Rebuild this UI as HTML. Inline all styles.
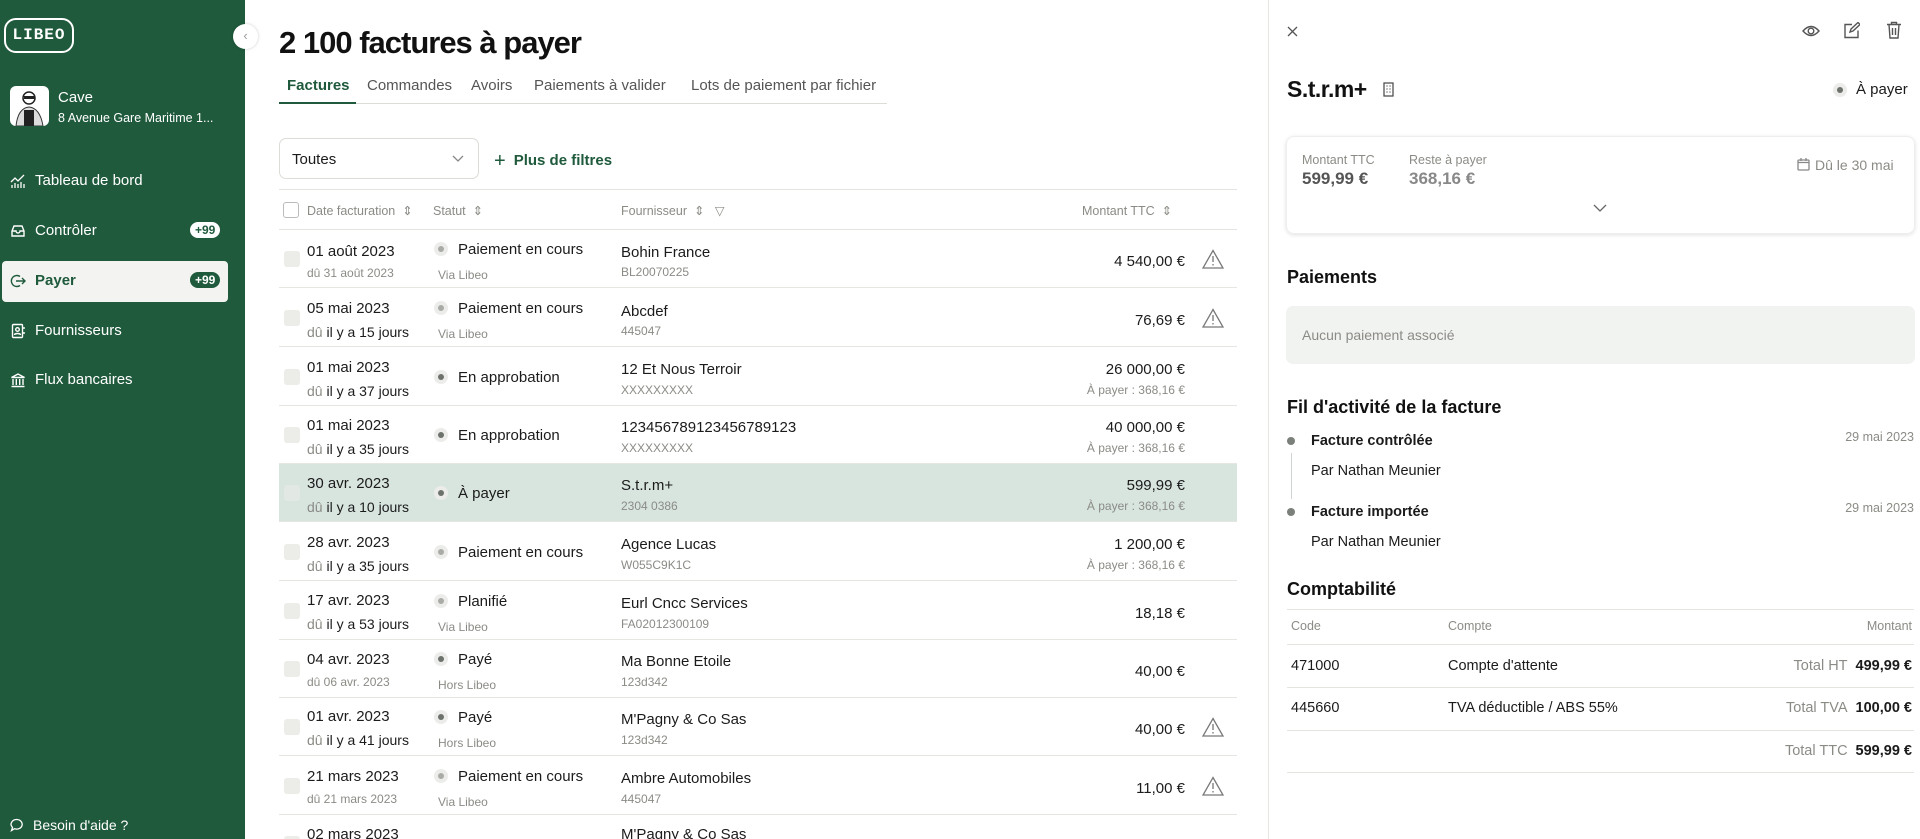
<!DOCTYPE html>
<html><head><meta charset="utf-8">
<style>
*{box-sizing:border-box;margin:0;padding:0}
html{width:1920px;height:839px;overflow:hidden}
body{width:1920px;height:839px;overflow:hidden;position:relative;background:#fff;font-family:"Liberation Sans",Arial,sans-serif;color:#1b1b1b;font-size:15px}
.a{position:absolute;white-space:nowrap}
#sb{position:absolute;left:0;top:0;width:245px;height:839px;background:#1f5a3c;color:#fff}
.nav{position:absolute;left:10px;font-size:15px;color:#fff;display:flex;align-items:center;gap:9px}
.badge{position:absolute;font-size:12px;font-weight:bold;border-radius:9px;padding:1px 5px}
.g{color:#8b8b86}
.s13{font-size:12px}
.row{position:absolute;left:279px;width:958px;height:58px;border-bottom:1px solid #e4e6e1}
.row .a{font-size:15px}
.row .a.s13{font-size:12px}
.cb{position:absolute;left:5px;top:21px;width:16px;height:16px;border-radius:3px;background:#ecece8}
.dot{position:absolute;width:14px;height:14px;border-radius:50%;background:#ecedea}
.dot:after{content:"";position:absolute;left:4px;top:4px;width:6px;height:6px;border-radius:50%;background:#a9aca6}
.dot.dk:after{background:#6d726c}
.warn{position:absolute;left:923px;top:19px}
h2{position:absolute;font-size:18px;font-weight:bold;left:1287px;color:#111}
.ln{position:absolute;left:1287px;width:627px;height:1px;background:#e2e5e0}
</style></head><body>

<div id="sb">
  <div class="a" style="left:4px;top:18px;width:70px;height:35px;border:2px solid #fff;border-radius:12px;font-weight:bold;font-size:16px;letter-spacing:1px;text-align:center;line-height:31px;font-family:'Liberation Mono',monospace">LIBEO</div>
  <div class="a" style="left:10px;top:86px;width:39px;height:40px;background:#fff;border-radius:6px;overflow:hidden">
    <svg width="39" height="40" viewBox="0 0 39 40"><circle cx="19" cy="12" r="6" fill="none" stroke="#222" stroke-width="1.5"/><rect x="14" y="10" width="11" height="3" fill="#222"/><path d="M6 40 Q8 22 19 21 Q30 22 33 40Z" fill="#ddd" stroke="#333"/><rect x="14" y="24" width="10" height="16" fill="#222"/></svg>
  </div>
  <div class="a" style="left:58px;top:89px;font-size:15px">Cave</div>
  <div class="a" style="left:58px;top:111px;font-size:12.5px">8 Avenue Gare Maritime 1...</div>

  <div class="nav" style="top:172px"><svg width="16" height="16" viewBox="0 0 16 16" fill="none" stroke="#fff" stroke-width="1.3"><path d="M1 9l4-4 3 3 6-6"/><path d="M2 15v-3M5 15v-5M8 15v-4M11 15v-6M14 15v-4"/></svg>Tableau de bord</div>
  <div class="nav" style="top:222px"><svg width="16" height="16" viewBox="0 0 16 16" fill="none" stroke="#fff" stroke-width="1.4"><path d="M2 8l2-5h8l2 5v5H2z"/><path d="M2 8h4a2 2 0 0 0 4 0h4"/></svg>Contrôler</div>
  <div class="badge" style="left:190px;top:222px;background:#fff;color:#1f5a3c">+99</div>
  <div class="a" style="left:2px;top:261px;width:226px;height:41px;background:#f3f4f1;border-radius:4px"></div>
  <div class="nav" style="top:272px;color:#1f5a3c;font-weight:bold"><svg width="16" height="16" viewBox="0 0 16 16" fill="none" stroke="#1f5a3c" stroke-width="1.4"><path d="M10 3.5A5.5 5.5 0 1 0 10 12.5"/><path d="M6 8h9M12 5l3 3-3 3"/></svg>Payer</div>
  <div class="badge" style="left:190px;top:272px;background:#1f5a3c;color:#fff">+99</div>
  <div class="nav" style="top:322px"><svg width="16" height="16" viewBox="0 0 16 16" fill="none" stroke="#fff" stroke-width="1.4"><rect x="2.5" y="1.5" width="10" height="13" rx="1"/><circle cx="7.5" cy="6.5" r="1.8"/><path d="M4.5 12c0-2 6-2 6 0M14 4v2M14 9v2"/></svg>Fournisseurs</div>
  <div class="nav" style="top:371px"><svg width="16" height="16" viewBox="0 0 16 16" fill="none" stroke="#fff" stroke-width="1.4"><path d="M1.5 5.5L8 2l6.5 3.5zM3 7v6M6.3 7v6M9.7 7v6M13 7v6M1.5 14.5h13"/></svg>Flux bancaires</div>
  <div class="nav" style="top:817px;left:10px;font-size:14px"><svg width="14" height="14" viewBox="0 0 14 14" fill="none" stroke="#fff" stroke-width="1.3"><path d="M7 1.5a5.5 4.8 0 1 1-2.5 9.2L1.5 12.5l1-3A5.5 4.8 0 0 1 7 1.5z"/></svg>Besoin d'aide ?</div>
</div>
<div class="a" style="left:233px;top:24px;width:25px;height:25px;border-radius:50%;background:#fff;box-shadow:0 0 3px rgba(0,0,0,.2);color:#999;font-size:13px;text-align:center;line-height:24px">‹</div>

<div class="a" style="left:279px;top:25px;font-size:31px;font-weight:bold;letter-spacing:-1px;color:#111">2 100 factures à payer</div>
<div class="a" style="left:287px;top:77px;font-size:15px;font-weight:bold;color:#1f5a3c">Factures</div>
<div class="a" style="left:367px;top:77px;font-size:15px;color:#555">Commandes</div>
<div class="a" style="left:471px;top:77px;font-size:15px;color:#555">Avoirs</div>
<div class="a" style="left:534px;top:77px;font-size:15px;color:#555">Paiements à valider</div>
<div class="a" style="left:691px;top:77px;font-size:15px;color:#555">Lots de paiement par fichier</div>
<div class="a" style="left:279px;top:103px;width:608px;height:1px;background:#dcdcd8"></div>
<div class="a" style="left:279px;top:102px;width:77px;height:2px;background:#1f5a3c"></div>

<div class="a" style="left:279px;top:138px;width:200px;height:41px;border:1px solid #dcdcd8;border-radius:7px;font-size:15px;padding:12px 12px">Toutes
<svg style="position:absolute;right:14px;top:16px" width="12" height="8" viewBox="0 0 12 8" fill="none" stroke="#888" stroke-width="1.3"><path d="M1 1l5 5 5-5"/></svg></div>
<div class="a" style="left:494px;top:148px;font-size:15px;font-weight:bold;color:#1f5a3c"><span style="font-size:20px;font-weight:normal;position:relative;top:2px;margin-right:8px">+</span>Plus de filtres</div>

<div class="a" style="left:279px;top:189px;width:958px;height:1px;background:#e2e5e0"></div>
<div class="a" style="left:283px;top:202px;width:16px;height:16px;border:1px solid #bbb;border-radius:3px"></div>
<div class="a g" style="left:307px;top:203px;font-size:12.5px">Date facturation &nbsp;⇕</div>
<div class="a g" style="left:433px;top:203px;font-size:12.5px">Statut &nbsp;⇕</div>
<div class="a g" style="left:621px;top:203px;font-size:12.5px">Fournisseur &nbsp;⇕ &nbsp; ▽</div>
<div class="a g" style="left:1082px;top:203px;font-size:12.5px">Montant TTC &nbsp;⇕</div>
<div class="a" style="left:279px;top:229px;width:958px;height:1px;background:#e2e5e0"></div>

<div class="row" style="top:230px"><div class="cb"></div>
<div class="a" style="left:28px;top:13px">01 août 2023</div><div class="a g s13" style="left:28px;top:36px">dû 31 août 2023</div>
<div class="dot" style="left:155px;top:12px"></div><div class="a" style="left:179px;top:11px">Paiement en cours</div><div class="a g s13" style="left:159px;top:38px">Via Libeo</div>
<div class="a" style="left:342px;top:14px">Bohin France</div><div class="a g s13" style="left:342px;top:35px">BL20070225</div>
<div class="a" style="right:52px;top:23px">4 540,00 €</div>
<svg class="warn" width="22" height="20" viewBox="0 0 22 20" fill="none" stroke="#777" stroke-width="1.3"><path d="M11 1.5L21 19H1z"/><path d="M11 7v6M11 15v1.5"/></svg></div>

<div class="row" style="top:289px"><div class="cb"></div>
<div class="a" style="left:28px;top:11px">05 mai 2023</div><div class="a s13" style="left:28px;top:35px;font-size:14px!important"><span class="g">dû</span> il y a 15 jours</div>
<div class="dot" style="left:155px;top:12px"></div><div class="a" style="left:179px;top:11px">Paiement en cours</div><div class="a g s13" style="left:159px;top:38px">Via Libeo</div>
<div class="a" style="left:342px;top:14px">Abcdef</div><div class="a g s13" style="left:342px;top:35px">445047</div>
<div class="a" style="right:52px;top:23px">76,69 €</div>
<svg class="warn" width="22" height="20" viewBox="0 0 22 20" fill="none" stroke="#777" stroke-width="1.3"><path d="M11 1.5L21 19H1z"/><path d="M11 7v6M11 15v1.5"/></svg></div>

<div class="row" style="top:348px"><div class="cb"></div>
<div class="a" style="left:28px;top:11px">01 mai 2023</div><div class="a" style="left:28px;top:35px;font-size:14px"><span class="g">dû</span> il y a 37 jours</div>
<div class="dot dk" style="left:155px;top:22px"></div><div class="a" style="left:179px;top:21px">En approbation</div>
<div class="a" style="left:342px;top:13px">12 Et Nous Terroir</div><div class="a g s13" style="left:342px;top:35px">XXXXXXXXX</div>
<div class="a" style="right:52px;top:13px">26 000,00 €</div><div class="a g s13" style="right:52px;top:35px">À payer : 368,16 €</div></div>

<div class="row" style="top:406px"><div class="cb"></div>
<div class="a" style="left:28px;top:11px">01 mai 2023</div><div class="a" style="left:28px;top:35px;font-size:14px"><span class="g">dû</span> il y a 35 jours</div>
<div class="dot dk" style="left:155px;top:22px"></div><div class="a" style="left:179px;top:21px">En approbation</div>
<div class="a" style="left:342px;top:13px">123456789123456789123</div><div class="a g s13" style="left:342px;top:35px">XXXXXXXXX</div>
<div class="a" style="right:52px;top:13px">40 000,00 €</div><div class="a g s13" style="right:52px;top:35px">À payer : 368,16 €</div></div>

<div class="row" style="top:464px;background:#d8e5df"><div class="cb" style="background:#e2e8e4"></div>
<div class="a" style="left:28px;top:11px">30 avr. 2023</div><div class="a" style="left:28px;top:35px;font-size:14px"><span class="g">dû</span> il y a 10 jours</div>
<div class="dot dk" style="left:155px;top:22px"></div><div class="a" style="left:179px;top:21px">À payer</div>
<div class="a" style="left:342px;top:13px">S.t.r.m+</div><div class="a g s13" style="left:342px;top:35px">2304 0386</div>
<div class="a" style="right:52px;top:13px">599,99 €</div><div class="a g s13" style="right:52px;top:35px">À payer : 368,16 €</div></div>

<div class="row" style="top:523px"><div class="cb"></div>
<div class="a" style="left:28px;top:11px">28 avr. 2023</div><div class="a" style="left:28px;top:35px;font-size:14px"><span class="g">dû</span> il y a 35 jours</div>
<div class="dot" style="left:155px;top:22px"></div><div class="a" style="left:179px;top:21px">Paiement en cours</div>
<div class="a" style="left:342px;top:13px">Agence Lucas</div><div class="a g s13" style="left:342px;top:35px">W055C9K1C</div>
<div class="a" style="right:52px;top:13px">1 200,00 €</div><div class="a g s13" style="right:52px;top:35px">À payer : 368,16 €</div></div>

<div class="row" style="top:582px"><div class="cb"></div>
<div class="a" style="left:28px;top:10px">17 avr. 2023</div><div class="a" style="left:28px;top:34px;font-size:14px"><span class="g">dû</span> il y a 53 jours</div>
<div class="dot" style="left:155px;top:12px"></div><div class="a" style="left:179px;top:11px">Planifié</div><div class="a g s13" style="left:159px;top:38px">Via Libeo</div>
<div class="a" style="left:342px;top:13px">Eurl Cncc Services</div><div class="a g s13" style="left:342px;top:35px">FA02012300109</div>
<div class="a" style="right:52px;top:23px">18,18 €</div></div>

<div class="row" style="top:640px"><div class="cb"></div>
<div class="a" style="left:28px;top:11px">04 avr. 2023</div><div class="a g s13" style="left:28px;top:35px">dû 06 avr. 2023</div>
<div class="dot dk" style="left:155px;top:12px"></div><div class="a" style="left:179px;top:11px">Payé</div><div class="a g s13" style="left:159px;top:38px">Hors Libeo</div>
<div class="a" style="left:342px;top:13px">Ma Bonne Etoile</div><div class="a g s13" style="left:342px;top:35px">123d342</div>
<div class="a" style="right:52px;top:23px">40,00 €</div></div>

<div class="row" style="top:698px"><div class="cb"></div>
<div class="a" style="left:28px;top:10px">01 avr. 2023</div><div class="a" style="left:28px;top:34px;font-size:14px"><span class="g">dû</span> il y a 41 jours</div>
<div class="dot dk" style="left:155px;top:12px"></div><div class="a" style="left:179px;top:11px">Payé</div><div class="a g s13" style="left:159px;top:38px">Hors Libeo</div>
<div class="a" style="left:342px;top:13px">M'Pagny &amp; Co Sas</div><div class="a g s13" style="left:342px;top:35px">123d342</div>
<div class="a" style="right:52px;top:23px">40,00 €</div>
<svg class="warn" width="22" height="20" viewBox="0 0 22 20" fill="none" stroke="#777" stroke-width="1.3"><path d="M11 1.5L21 19H1z"/><path d="M11 7v6M11 15v1.5"/></svg></div>

<div class="row" style="top:757px"><div class="cb"></div>
<div class="a" style="left:28px;top:11px">21 mars 2023</div><div class="a g s13" style="left:28px;top:35px">dû 21 mars 2023</div>
<div class="dot" style="left:155px;top:12px"></div><div class="a" style="left:179px;top:11px">Paiement en cours</div><div class="a g s13" style="left:159px;top:38px">Via Libeo</div>
<div class="a" style="left:342px;top:13px">Ambre Automobiles</div><div class="a g s13" style="left:342px;top:35px">445047</div>
<div class="a" style="right:52px;top:23px">11,00 €</div>
<svg class="warn" width="22" height="20" viewBox="0 0 22 20" fill="none" stroke="#777" stroke-width="1.3"><path d="M11 1.5L21 19H1z"/><path d="M11 7v6M11 15v1.5"/></svg></div>

<div class="row" style="top:815px;height:24px;border:none;overflow:hidden"><div class="cb"></div>
<div class="a" style="left:28px;top:11px">02 mars 2023</div>
<div class="a" style="left:342px;top:11px">M'Pagny &amp; Co Sas</div></div>

<div class="a" style="left:1268px;top:0;width:652px;height:839px;background:#fff;border-left:1px solid #e6e6e3"></div>
<svg class="a" style="left:1287px;top:26px" width="11" height="11" viewBox="0 0 11 11" stroke="#555" stroke-width="1.3"><path d="M1 1l9 9M10 1l-9 9"/></svg>
<svg class="a" style="left:1802px;top:23px" width="18" height="16" viewBox="0 0 18 16" fill="none" stroke="#555" stroke-width="1.4"><path d="M1 8Q9 -1 17 8Q9 17 1 8z"/><circle cx="9" cy="8" r="2.8"/></svg>
<svg class="a" style="left:1843px;top:22px" width="17" height="17" viewBox="0 0 17 17" fill="none" stroke="#555" stroke-width="1.4"><path d="M9 2.5H2v13h13V8.5"/><path d="M7 10l1-3 7-6.5 2 2-7 6.5z"/></svg>
<svg class="a" style="left:1886px;top:21px" width="16" height="18" viewBox="0 0 16 18" fill="none" stroke="#555" stroke-width="1.4"><path d="M1 3.5h14M5.5 3.5V1.5h5v2M3 3.5l1 13.5h8l1-13.5M6.5 7v7M9.5 7v7"/></svg>

<div class="a" style="left:1287px;top:76px;font-size:23px;font-weight:bold;letter-spacing:-0.5px;color:#111">S.t.r.m+</div>
<svg class="a" style="left:1383px;top:82px" width="11" height="15" viewBox="0 0 11 15" fill="none" stroke="#444" stroke-width="1.2"><rect x="1" y="1" width="9" height="13"/><path d="M3.5 4h1M6.5 4h1M3.5 7h1M6.5 7h1M3.5 10h1M6.5 10h1"/></svg>
<div class="dot dk" style="left:1833px;top:83px"></div>
<div class="a" style="left:1856px;top:81px;font-size:15px">À payer</div>

<div class="a" style="left:1286px;top:136px;width:629px;height:98px;border-radius:8px;box-shadow:0 1px 4px rgba(0,0,0,.12);border:1px solid #eee"></div>
<div class="a g" style="left:1302px;top:153px;font-size:12.5px">Montant TTC</div>
<div class="a" style="left:1302px;top:169px;font-size:17px;font-weight:bold;color:#555">599,99 €</div>
<div class="a g" style="left:1409px;top:153px;font-size:12.5px">Reste à payer</div>
<div class="a" style="left:1409px;top:169px;font-size:17px;font-weight:bold;color:#888">368,16 €</div>
<svg class="a" style="left:1797px;top:157px" width="13" height="14" viewBox="0 0 13 14" fill="none" stroke="#888" stroke-width="1.3"><rect x="1" y="3" width="11" height="10" rx="1"/><path d="M1 5.5h11M4 1v3M9 1v3"/></svg>
<div class="a g" style="left:1815px;top:157px;font-size:14px">Dû le 30 mai</div>
<svg class="a" style="left:1593px;top:204px" width="14" height="8" viewBox="0 0 14 8" fill="none" stroke="#666" stroke-width="1.3"><path d="M1 1l6 6 6-6"/></svg>

<h2 style="top:267px">Paiements</h2>
<div class="a" style="left:1286px;top:306px;width:629px;height:58px;background:#f1f3f1;border-radius:7px"></div>
<div class="a g" style="left:1302px;top:327px;font-size:14px">Aucun paiement associé</div>

<h2 style="top:397px">Fil d'activité de la facture</h2>
<div class="a" style="left:1287px;top:437px;width:8px;height:8px;border-radius:50%;background:#7b807b"></div>
<div class="a" style="left:1291px;top:453px;width:1px;height:46px;background:#cfd6d2"></div>
<div class="a" style="left:1311px;top:433px;font-size:14.5px;font-weight:bold">Facture contrôlée</div>
<div class="a" style="left:1311px;top:463px;font-size:14.5px">Par Nathan Meunier</div>
<div class="a g" style="right:6px;top:430px;font-size:12.5px">29 mai 2023</div>
<div class="a" style="left:1287px;top:508px;width:8px;height:8px;border-radius:50%;background:#7b807b"></div>
<div class="a" style="left:1311px;top:504px;font-size:14.5px;font-weight:bold">Facture importée</div>
<div class="a" style="left:1311px;top:534px;font-size:14.5px">Par Nathan Meunier</div>
<div class="a g" style="right:6px;top:501px;font-size:12.5px">29 mai 2023</div>

<h2 style="top:579px">Comptabilité</h2>
<div class="ln" style="top:609px"></div>
<div class="a g" style="left:1291px;top:619px;font-size:12.5px">Code</div>
<div class="a g" style="left:1448px;top:619px;font-size:12.5px">Compte</div>
<div class="a g" style="right:8px;top:619px;font-size:12.5px">Montant</div>
<div class="ln" style="top:644px"></div>
<div class="a" style="left:1291px;top:658px;font-size:14.5px">471000</div>
<div class="a" style="left:1448px;top:658px;font-size:14.5px">Compte d'attente</div>
<div class="a" style="right:8px;top:658px;font-size:14.5px"><span class="g" style="margin-right:8px">Total HT</span><b>499,99 €</b></div>
<div class="ln" style="top:687px"></div>
<div class="a" style="left:1291px;top:700px;font-size:14.5px">445660</div>
<div class="a" style="left:1448px;top:700px;font-size:14.5px">TVA déductible / ABS 55%</div>
<div class="a" style="right:8px;top:700px;font-size:14.5px"><span class="g" style="margin-right:8px">Total TVA</span><b>100,00 €</b></div>
<div class="ln" style="top:730px"></div>
<div class="a" style="right:8px;top:743px;font-size:14.5px"><span class="g" style="margin-right:8px">Total TTC</span><b>599,99 €</b></div>
<div class="ln" style="top:772px"></div>
</body></html>
